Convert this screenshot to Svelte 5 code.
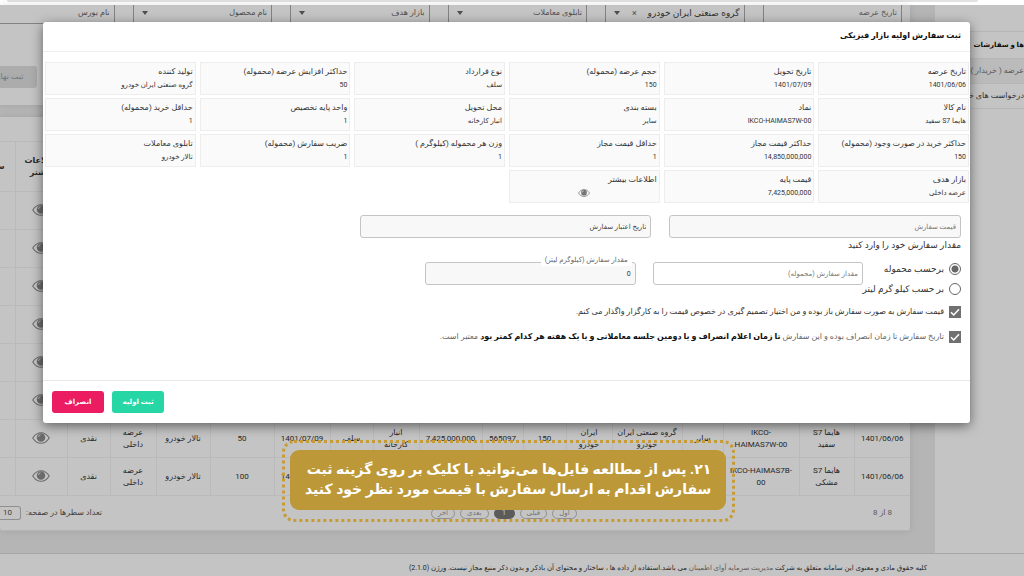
<script>
	const filters = [
		{ label: 'تابلوی معاملات' },
		{ label: 'بازار هدف' },
		{ label: 'نام محصول' }
	];

	const details = [
		['تاریخ عرضه', '1401/06/06'],
		['تاریخ تحویل', '1401/07/09'],
		['حجم عرضه (محموله)', '150'],
		['نوع قرارداد', 'سلف'],
		['حداکثر افزایش عرضه (محموله)', '50'],
		['تولید کننده', 'گروه صنعتی ایران خودرو'],
		['نام کالا', 'هایما S7 سفید'],
		['نماد', 'IKCO-HAIMAS7W-00'],
		['بسته بندی', 'سایر'],
		['محل تحویل', 'انبار کارخانه'],
		['واحد پایه تخصیص', '1'],
		['حداقل خرید (محموله)', '1'],
		['حداکثر خرید در صورت وجود (محموله)', '150'],
		['حداکثر قیمت مجاز', '14,850,000,000'],
		['حداقل قیمت مجاز', '1'],
		['وزن هر محموله (کیلوگرم )', '1'],
		['ضریب سفارش (محموله)', '1'],
		['تابلوی معاملات', 'تالار خودرو'],
		['بازار هدف', 'عرضه داخلی'],
		['قیمت پایه', '7,425,000,000'],
		['اطلاعات بیشتر', null]
	];

	// relative column widths, right to left
	const columns = [56, 55, 76, 41, 70, 46, 43, 41, 63, 46, 43, 56, 64, 54, 46, 43, 52, 32];

	const offer = (name, symbol, code, count) => [
		'1401/06/06', name, symbol, 'سایر', 'گروه صنعتی ایران خودرو', 'ایران خودرو',
		'150', code, '7,425,000,000', 'انبار کارخانه', 'سلف', '1401/07/09',
		count, 'تالار خودرو', 'عرضه داخلی', 'نقدی'
	];

	const rows = [
		...Array.from({ length: 6 }, () => Array(16).fill('')),
		offer('هایما S7 سفید', 'IKCO-HAIMAS7W-00', '565097', '50'),
		offer('هایما S7 مشکی', 'IKCO-HAIMAS7B-00', '565098', '100')
	];

	let unit = $state('lot');
	let openPrice = $state(true);
	let openDate = $state(true);
</script>

{#snippet eye()}
	<svg class="eye" viewBox="0 0 36 24" aria-hidden="true">
		<path d="M1.5 12C6 5 11.500 1.500 18 1.500S30 5 34.500 12C30 19 24.500 22.500 18 22.500S6 19 1.500 12Z" fill="none" stroke="currentColor" stroke-width="2.200" />
		<circle cx="18" cy="11" r="8.500" fill="currentColor" />
		<path d="M13 10a5 5 0 0 1 4-4.500" fill="none" stroke="#fff" stroke-width="1.600" />
	</svg>
{/snippet}

{#snippet caret()}
	<svg class="caret" viewBox="0 0 6 4" aria-hidden="true"><path d="M0 0h6L3 4Z" fill="currentColor" /></svg>
{/snippet}

<div class="screen" dir="rtl">
	<div class="browser"><div class="address"></div></div>

	<div class="page">
		<div class="layout">
			<nav class="sidebar">
				<span class="item"></span>
				<a class="item title" href="#orders">ها و سفارشات</a>
				<a class="item active" href="#offers">عرضه ( خریدار )</a>
				<a class="item" href="#requests">درخواست های خریدار</a>
			</nav>

			<main>
				<section class="card search">
					<div class="filters">
						<input class="filter" aria-label="تاریخ عرضه" placeholder="تاریخ عرضه" />
						<div class="filter">
							<select class="chosen" aria-label="تولید کننده"><option>گروه صنعتی ایران خودرو</option></select>
							<button class="clear" aria-label="حذف">×</button>
							{@render caret()}
						</div>
						{#each filters as filter}
							<div class="filter">
								<select aria-label={filter.label}><option>{filter.label}</option></select>
								{@render caret()}
							</div>
						{/each}
						<div class="filter last">
							<select aria-label="نام بورس"><option>نام بورس</option></select>
						</div>
					</div>
					<button class="final" disabled>ثبت نهایی</button>
				</section>

				<section class="card offers">
					<div class="toolbar"></div>
					<table>
						<colgroup>
							{#each columns as width}
								<col style="width: {width}px" />
							{/each}
						</colgroup>
						<thead>
							<tr>
								{#each columns.slice(2) as _}<th></th>{/each}
								<th>اطلاعات بیشتر</th>
								<th>س</th>
							</tr>
						</thead>
						<tbody>
							{#each rows as row}
								<tr>
									{#each row as cell}<td>{cell}</td>{/each}
									<td>{@render eye()}</td>
									<td></td>
								</tr>
							{/each}
						</tbody>
					</table>
					<div class="pager">
						<span class="total">8 از 8</span>
						<div class="pages">
							<button>اول</button>
							<button>قبلی</button>
							<button class="current">1</button>
							<button>بعدی</button>
							<button>آخر</button>
						</div>
						<label class="size">
							تعداد سطرها در صفحه:
							<select><option>10</option></select>
						</label>
					</div>
				</section>
			</main>
		</div>

		<footer>
			کلیه حقوق مادی و معنوی این سامانه متعلق به شرکت <a href="#company">مدیریت سرمایه آوای اطمینان</a> می باشد.استفاده از داده ها ، ساختار و محتوای آن باذکر و بدون ذکر منبع مجاز نیست. ورژن (2.1.0)
		</footer>

		<div class="backdrop">
			<div class="modal" role="dialog" aria-labelledby="modal-title">
				<h1 id="modal-title">ثبت سفارش اولیه بازار فیزیکی</h1>

				<div class="body">
					<dl class="details">
						{#each details as [label, value]}
							<div class="detail">
								<dt>{label}</dt>
								<dd class:icon={value === null}>
									{#if value === null}{@render eye()}{:else}{value}{/if}
								</dd>
							</div>
						{/each}
					</dl>

					<form>
						<div class="wide">
							<input class="field grey" aria-label="قیمت سفارش" placeholder="قیمت سفارش" />
							<input class="field grey dark" aria-label="تاریخ اعتبار سفارش" placeholder="تاریخ اعتبار سفارش" />
						</div>

						<p class="hint">مقدار سفارش خود را وارد کنید</p>

						<div class="amount">
							<div class="units">
								<label><input type="radio" value="lot" bind:group={unit} /> برحسب محموله</label>
								<label><input type="radio" value="kilo" bind:group={unit} /> بر حسب کیلو گرم لیتر</label>
							</div>
							<input class="field" aria-label="مقدار سفارش (محموله)" placeholder="مقدار سفارش (محموله)" />
							<div class="outlined">
								<label for="kilos">مقدار سفارش (کیلوگرم لیتر)</label>
								<input id="kilos" class="field grey dark" value="0" />
							</div>
						</div>

						<div class="checks">
							<label class="check">
								<input type="checkbox" bind:checked={openPrice} />
								<svg viewBox="0 0 12 12" aria-hidden="true"><path d="M2 6.300 4.700 9 10 3.300" /></svg>
								<span>قیمت سفارش به صورت سفارش باز بوده و من اختیار تصمیم گیری در خصوص قیمت را به کارگزار واگذار می کنم.</span>
							</label>
							<label class="check">
								<input type="checkbox" bind:checked={openDate} />
								<svg viewBox="0 0 12 12" aria-hidden="true"><path d="M2 6.300 4.700 9 10 3.300" /></svg>
								<span><i>تاریخ سفارش تا زمان انصراف بوده و این سفارش</i> <b>تا زمان اعلام انصراف و یا دومین جلسه معاملاتی و یا یک هفته هر کدام کمتر بود</b> <i>معتبر است.</i></span>
							</label>
						</div>
					</form>
				</div>

				<div class="actions">
					<button class="submit">ثبت اولیه</button>
					<button class="cancel">انصراف</button>
				</div>
			</div>
		</div>
	</div>

	<div class="callout">
		<p>۲۱. پس از مطالعه فایل‌ها می‌توانید با کلیک بر روی گزینه ثبت<br />سفارش اقدام به ارسال سفارش با قیمت مورد نظر خود کنید</p>
	</div>
</div>

<style>
	:global(body) {
		background: #fff;
	}

	.screen {
		position: relative;
		display: flex;
		flex-direction: column;
		min-height: 100vh;
		overflow: hidden;
		font-family: Roboto, 'DejaVu Sans', sans-serif;
		font-size: 8px;
		line-height: 12px;
		color: #333;
	}

	.screen *,
	.screen *::before {
		box-sizing: border-box;
	}

	input,
	select,
	button {
		margin: 0;
		font: inherit;
		color: inherit;
	}

	.browser {
		height: 5px;
		padding: 0 46px 0 7px;
	}

	.address {
		height: 2px;
		border-radius: 0 0 8px 8px;
		background: #e2e2e2;
	}

	.page {
		position: relative;
		flex: 1;
		display: flex;
		flex-direction: column;
	}

	.layout {
		display: flex;
	}

	.sidebar {
		width: 89px;
		flex-shrink: 0;
	}

	.item {
		display: block;
		height: 25px;
		border-bottom: 1px solid #ededed;
		line-height: 24px;
		white-space: nowrap;
		color: #444;
		text-decoration: none;
	}

	.item:nth-child(-n + 2) {
		height: 27px;
		line-height: 27px;
	}

	.item.title {
		font-size: 7px;
		font-weight: bold;
		color: #111;
	}

	.item.active {
		background: #f4f4f4;
		color: #777;
	}

	main {
		flex: 1;
		min-width: 0;
		padding: 0 25px 12px 0;
		background: #ececec;
	}

	.card {
		background: #fff;
		box-shadow: 0 0 8px rgba(0, 0, 0, 0.1);
	}

	.search {
		height: 100px;
		margin-bottom: 12px;
	}

	.filters {
		display: grid;
		grid-template-columns: repeat(5, 140fr) 115fr;
		gap: 18px;
		padding-right: 8px;
	}

	.filter {
		display: flex;
		align-items: center;
		width: 100%;
		min-width: 0;
		height: 19px;
		padding: 0 4px 3px 8px;
		border: solid #aaa;
		border-width: 0 1px 1px;
		background: none;
		color: #666;
	}

	.filter.last {
		border-left: 0;
	}

	.filter::placeholder {
		color: #777;
		opacity: 1;
	}

	select {
		appearance: none;
		border: 0;
		background: none;
		padding: 0;
	}

	.filter select {
		flex: 1;
		min-width: 0;
	}

	.filter .chosen {
		font-size: 9px;
		color: #444;
	}

	.caret {
		width: 6px;
		height: 4px;
	}

	.clear {
		padding: 0 10px 0 12px;
		border: 0;
		background: none;
		font-size: 9px;
	}

	.final {
		display: block;
		width: 59px;
		height: 22px;
		margin: 42px auto 0 -22px;
		border: 0;
		border-radius: 3px;
		background: #e0e0e0;
		color: #999;
	}

	.offers {
		border-radius: 0 0 4px 4px;
	}

	.toolbar {
		height: 24px;
	}

	/* last column runs off the edge of the screen */
	table {
		width: calc(100% + 17px);
		table-layout: fixed;
		border-collapse: collapse;
	}

	th,
	td {
		height: 38px;
		padding: 0 4px;
		border: solid #f2f2f2;
		border-width: 1px 0 1px 1px;
		text-align: center;
		vertical-align: middle;
		color: #333;
	}

	td {
		padding: 0 1px;
	}

	td:nth-child(2),
	td:nth-child(6),
	td:nth-child(10),
	td:nth-child(15) {
		padding: 0 8px;
	}

	td:nth-child(3) {
		padding: 0 6px;
		direction: ltr;
	}

	th {
		height: 50px;
		font-weight: bold;
	}

	.eye {
		display: inline-block;
		width: 18px;
		height: 12px;
		vertical-align: middle;
		color: #8c8c8c;
	}

	.pager {
		display: flex;
		align-items: center;
		height: 35px;
		padding: 0 18px 0 0;
		margin-bottom: 10px;
		border-bottom: 1px solid #ececec;
		color: #555;
	}

	.total {
		flex: 314 1 0;
		color: #777;
	}

	.pages {
		display: flex;
		gap: 5px;
	}

	.pages button {
		min-width: 21px;
		height: 11px;
		padding: 0 6px;
		border: 1px solid #bbb;
		border-radius: 6px;
		background: none;
		font-size: 7px;
		line-height: 9px;
		color: #999;
	}

	.pages .current {
		border-color: #777;
		background: #777;
		color: #fff;
	}

	.size {
		flex: 429 1 0;
		display: flex;
		align-items: center;
		justify-content: flex-end;
		gap: 5px;
		white-space: nowrap;
	}

	.size select {
		width: 21px;
		height: 14px;
		padding-right: 8px;
		border: 1px solid #bbb;
		border-left: 0;
		border-radius: 0 3px 3px 0;
	}

	footer {
		flex: 1;
		min-height: 24px;
		padding: 8px 97px 0 0;
		border-top: 1px solid #d8d8d8;
		font-size: 7px;
		white-space: nowrap;
		color: #333;
	}

	footer a {
		color: #777;
		text-decoration: none;
	}

	.backdrop {
		position: absolute;
		inset: 0;
		padding: 17px 54px 0 43px;
		background: rgba(0, 0, 0, 0.23);
	}

	.modal {
		border-radius: 3px;
		background: #fff;
		box-shadow: 0 3px 12px rgba(0, 0, 0, 0.5);
	}

	h1 {
		height: 30px;
		margin: 0;
		padding-right: 9px;
		border-bottom: 1px solid #eee;
		font-size: 8px;
		line-height: 28px;
		color: #111;
	}

	.body {
		min-height: 328px;
		padding: 10px 1px 10px 2px;
	}

	.details {
		display: grid;
		grid-template-columns: repeat(6, 1fr);
		gap: 3px 4px;
		margin: 0;
	}

	.detail {
		height: 33px;
		padding: 3px 2px 0;
		border: 1px solid #ededed;
		background: #fafafa;
		white-space: nowrap;
	}

	dd {
		margin: 0;
		padding-top: 1px;
		font-size: 7px;
	}

	dd.icon {
		text-align: center;
	}

	dd .eye {
		width: 12px;
		height: 8px;
		color: #757575;
	}

	form {
		padding: 12px 8px 0 0;
	}

	.wide {
		display: grid;
		grid-template-columns: 292fr 292fr 297fr;
		gap: 18px;
	}

	.field {
		width: 100%;
		height: 23px;
		padding: 0 4px;
		border: 1px solid #c4c4c4;
		border-radius: 3px;
		background: #fff;
		font-size: 7px;
	}

	.field.grey {
		background: #f8f8f8;
	}

	.field::placeholder {
		color: #777;
		opacity: 1;
	}

	.field.dark::placeholder {
		color: #444;
	}

	.hint {
		margin: 0 0 10px;
		font-size: 9px;
		line-height: 14px;
	}

	.amount {
		display: grid;
		grid-template-columns: 81px 210fr 210fr 363fr;
		gap: 17px;
	}

	.units {
		display: flex;
		flex-direction: column;
		gap: 6px;
	}

	.units label {
		display: flex;
		align-items: center;
		gap: 5px;
		height: 14px;
		font-size: 9px;
		white-space: nowrap;
	}

	.units input {
		appearance: none;
		flex-shrink: 0;
		width: 12px;
		height: 12px;
		border: 1px solid #666;
		border-radius: 50%;
	}

	.units input:checked {
		background: radial-gradient(circle, #666 3px, transparent 4px);
	}

	.outlined {
		position: relative;
	}

	.outlined label {
		position: absolute;
		top: -8px;
		right: 4px;
		padding: 0 4px;
		background: #fff;
		font-size: 7px;
		color: #666;
	}

	.checks {
		display: flex;
		flex-direction: column;
		gap: 11px;
		padding-top: 9px;
	}

	.check {
		display: flex;
		align-items: center;
		height: 14px;
		white-space: nowrap;
	}

	.check input {
		appearance: none;
		width: 12px;
		height: 12px;
		border: 1px solid #707070;
	}

	.check input:checked {
		background: #707070;
	}

	.check svg {
		width: 12px;
		height: 12px;
		margin-right: -12px;
		margin-left: 5px;
		fill: none;
		stroke: #fff;
		stroke-width: 1.5;
		pointer-events: none;
	}

	.check i {
		font-style: normal;
		color: #666;
	}

	.check b {
		color: #111;
	}

	.actions {
		display: flex;
		justify-content: flex-end;
		gap: 8px;
		padding: 10px 9px;
		border-top: 1px solid #e8e8e8;
	}

	.actions button {
		width: 52px;
		height: 22px;
		border: 0;
		border-radius: 3px;
		font-weight: bold;
		font-size: 7px;
		color: #fff;
	}

	.submit {
		background: #26d7a5;
	}

	.cancel {
		background: #eb1c62;
	}

	.callout {
		position: absolute;
		left: 282px;
		bottom: 55px;
		padding: 7px 6px 9px 5px;
		border: 3px dotted #c79c35;
		border-radius: 12px;
	}

	.callout p {
		margin: 0;
		padding: 9px 15px 11px;
		border-radius: 9px;
		background: #bc9838;
		font-size: 14px;
		font-weight: bold;
		line-height: 20px;
		white-space: nowrap;
		color: #fff;
	}
</style>
